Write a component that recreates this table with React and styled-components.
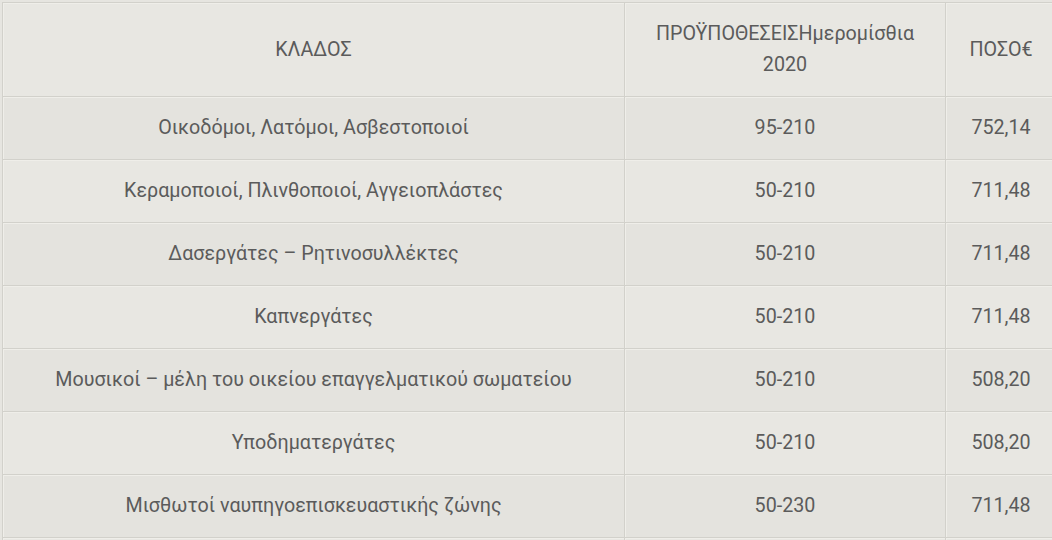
import React from 'react'
import styled, { createGlobalStyle } from 'styled-components'

const GlobalStyle = createGlobalStyle`
	html, body {
		margin: 0;
		padding: 0;
		background: #e6e5e0;
		overflow: hidden;
	}
`

const Wrap = styled.div`
	padding: 2px 0 0 2px;
	width: 1056px;
	height: 538px;
	overflow: hidden;
`

const Table = styled.table`
	width: 1054px;
	border-collapse: collapse;
	font-family: Roboto, "Noto Sans", sans-serif;
	font-size: 19.7px;
	line-height: 31px;
	color: #5b5b5b;
	table-layout: fixed;
`

const Row = styled.tr`
	background: ${p => (p.$dark ? '#e4e3de' : '#e8e7e2')};
`

const Cell = styled.td`
	border: 1px solid #d2d1cb;
	box-shadow: inset 1px 1px 0 #efeee9;
	padding: 15px 15px 16px;
	text-align: center;
	vertical-align: middle;
`

const HeadCell = styled(Cell).attrs({ as: 'th' })`
	font-weight: 400;
`

const rows = [
	['Οικοδόμοι, Λατόμοι, Ασβεστοποιοί', '95-210', '752,14'],
	['Κεραμοποιοί, Πλινθοποιοί, Αγγειοπλάστες', '50-210', '711,48'],
	['Δασεργάτες – Ρητινοσυλλέκτες', '50-210', '711,48'],
	['Καπνεργάτες', '50-210', '711,48'],
	['Μουσικοί – μέλη του οικείου επαγγελματικού σωματείου', '50-210', '508,20'],
	['Υποδηματεργάτες', '50-210', '508,20'],
	['Μισθωτοί ναυπηγοεπισκευαστικής ζώνης', '50-230', '711,48'],
	['', '', ''],
]

export default function App() {
	return (
		<>
			<GlobalStyle />
			<Wrap>
				<Table>
					<colgroup>
						<col style={{ width: 622 }} />
						<col style={{ width: 321 }} />
						<col style={{ width: 111 }} />
					</colgroup>
					<thead>
						<Row>
							<HeadCell>ΚΛΑΔΟΣ</HeadCell>
							<HeadCell>ΠΡΟΫΠΟΘΕΣΕΙΣΗμερομίσθια 2020</HeadCell>
							<HeadCell>ΠΟΣΟ€</HeadCell>
						</Row>
					</thead>
					<tbody>
						{rows.map((r, i) => (
							<Row key={i} $dark={i % 2 === 0}>
								<Cell>{r[0]}</Cell>
								<Cell>{r[1]}</Cell>
								<Cell>{r[2]}</Cell>
							</Row>
						))}
					</tbody>
				</Table>
			</Wrap>
		</>
	)
}
